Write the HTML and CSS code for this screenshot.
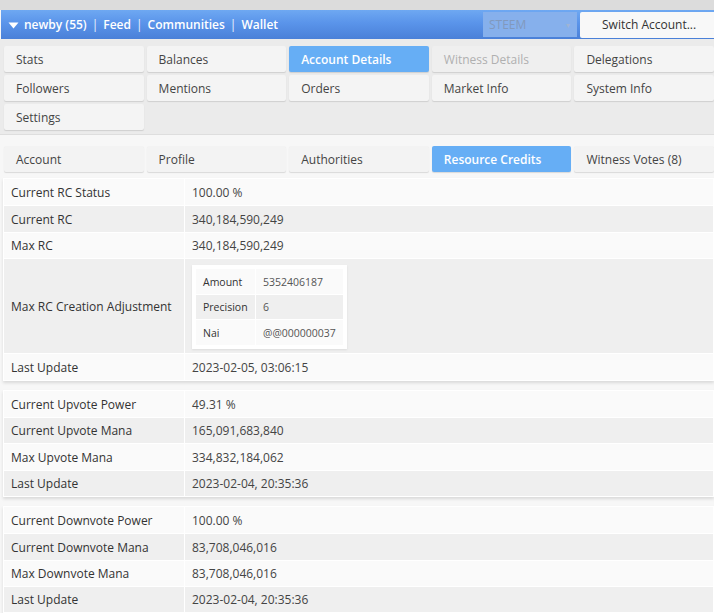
FILE: index.html
```html
<!DOCTYPE html>
<html>
<head>
<meta charset="utf-8">
<link rel="stylesheet" href="styles.css">
</head>
<body>
<div class="topstrip"></div>
<div class="navbar">
  <div class="nav-left">
    <svg class="caret" width="11" height="7" viewBox="0 0 11 7"><path d="M0.5 0.5 L10.5 0.5 L5.5 6.5 Z" fill="#ffffff"/></svg>
    <span>newby (55)</span><span class="sep">|</span><span>Feed</span><span class="sep">|</span><span>Communities</span><span class="sep">|</span><span>Wallet</span>
  </div>
  <div class="nav-right">
    <div class="select"><span>STEEM</span><span class="sel-arrow">▾</span></div>
    <div class="switch">Switch Account...</div>
  </div>
</div>
<div class="panel">
  <div class="tabgrid">
    <div class="tab">Stats</div>
    <div class="tab">Balances</div>
    <div class="tab active">Account Details</div>
    <div class="tab disabled">Witness Details</div>
    <div class="tab">Delegations</div>
    <div class="tab">Followers</div>
    <div class="tab">Mentions</div>
    <div class="tab">Orders</div>
    <div class="tab">Market Info</div>
    <div class="tab">System Info</div>
    <div class="tab">Settings</div>
  </div>
</div>
<div class="subtabs">
  <div class="tabgrid">
    <div class="tab">Account</div>
    <div class="tab">Profile</div>
    <div class="tab">Authorities</div>
    <div class="tab active">Resource Credits</div>
    <div class="tab">Witness Votes (8)</div>
  </div>
</div>
<div class="content">
  <table class="info">
    <tr class="r26"><td class="k">Current RC Status</td><td>100.00 %</td></tr>
    <tr class="r26"><td class="k">Current RC</td><td>340,184,590,249</td></tr>
    <tr><td class="k">Max RC</td><td>340,184,590,249</td></tr>
    <tr class="tall"><td class="k">Max RC Creation Adjustment</td><td class="nestcell">
      <table class="nested">
        <tr><td class="nk">Amount</td><td>5352406187</td></tr>
        <tr class="n24"><td class="nk">Precision</td><td>6</td></tr>
        <tr><td class="nk">Nai</td><td>@@000000037</td></tr>
      </table>
    </td></tr>
    <tr class="r26"><td class="k">Last Update</td><td>2023-02-05, 03:06:15</td></tr>
  </table>
  <table class="info">
    <tr class="r26"><td class="k">Current Upvote Power</td><td>49.31 %</td></tr>
    <tr><td class="k">Current Upvote Mana</td><td>165,091,683,840</td></tr>
    <tr class="r26"><td class="k">Max Upvote Mana</td><td>334,832,184,062</td></tr>
    <tr><td class="k">Last Update</td><td>2023-02-04, 20:35:36</td></tr>
  </table>
  <table class="info">
    <tr class="r26"><td class="k">Current Downvote Power</td><td>100.00 %</td></tr>
    <tr class="r26"><td class="k">Current Downvote Mana</td><td>83,708,046,016</td></tr>
    <tr><td class="k">Max Downvote Mana</td><td>83,708,046,016</td></tr>
    <tr><td class="k">Last Update</td><td>2023-02-04, 20:35:36</td></tr>
  </table>
</div>
</body>
</html>
```
FILE: styles.css
```css
html, body {
  margin: 0;
  padding: 0;
}
body {
  font-family: "Open Sans", "Noto Sans", sans-serif;
  font-size: 12px;
  color: #333;
  background: #f7f7f7;
  width: 714px;
  overflow: hidden;
}
.topstrip {
  height: 10px;
  background: #dcdcdc;
}
.navbar {
  height: 29px;
  margin-left: 1px;
  background: linear-gradient(to bottom, #6ea8f2 0%, #5a94ea 45%, #4a80d8 100%);
  display: flex;
  align-items: center;
  justify-content: space-between;
  color: #fff;
  font-weight: 600;
}
.nav-left {
  display: flex;
  align-items: center;
  padding-left: 7px;
  margin-top: -1px;
}
.caret {
  margin-right: 5px;
  margin-top: 2px;
}
.sep {
  margin: 0 5px;
  font-weight: 400;
  opacity: 0.9;
}
.nav-right {
  display: flex;
  align-items: center;
  height: 100%;
  gap: 3px;
}
.select {
  width: 94px;
  height: 25px;
  box-sizing: border-box;
  background: #86b0ec;
  color: #8199bd;
  font-weight: 400;
  display: flex;
  align-items: center;
  justify-content: space-between;
  padding: 0 7px 0 6px;
}
.sel-arrow {
  font-size: 8px;
  color: #9fb4d4;
}
.switch {
  width: 134px;
  height: 26px;
  box-sizing: border-box;
  background: #f8f8f8;
  color: #333;
  font-weight: 400;
  display: flex;
  align-items: center;
  padding-left: 22px;
  border-radius: 2px 0 0 2px;
}
.panel {
  background: #ebebeb;
  padding: 7px 0 4px 4px;
  border-bottom: 1px solid #dedede;
  box-shadow: 0 1px 1px rgba(0,0,0,0.05);
}
.tabgrid {
  display: grid;
  grid-template-columns: repeat(5, 1fr);
  gap: 3px;
}
.tab {
  height: 26px;
  box-sizing: border-box;
  background: #f4f4f4;
  border-radius: 2px;
  box-shadow: 0 1px 1px rgba(0,0,0,0.12);
  color: #444;
  display: flex;
  align-items: center;
  padding-left: 12px;
}
.tab.active {
  background: #66aef5;
  color: #fff;
  font-weight: 600;
}
.tab.disabled {
  color: #b0b0b0;
  background: #efefef;
}
.subtabs {
  padding: 11px 0 0 4px;
  background: #f7f7f7;
}
.subtabs .tab {
  background: #f3f3f3;
}
.subtabs .tab.active {
  background: #66aef5;
}
.content {
  padding: 6px 0 0 3px;
}
.info {
  width: 711px;
  border-collapse: separate;
  border-spacing: 1px;
  background: #fff;
  margin-bottom: 9px;
  box-shadow: 0 2px 3px rgba(0,0,0,0.12);
}
.info td {
  height: 25px;
  padding: 0 7px;
  box-sizing: border-box;
  color: #444;
  background: #fafafa;
  vertical-align: middle;
}
.info tr.r26 td {
  height: 26px;
}
.info tr:nth-child(even) td {
  background: #efefef;
}
.info td.k {
  width: 180px;
  color: #333;
}
.info tr.tall td {
  height: 94px;
  background: #efefef;
}
.info td.nestcell {
  padding: 6px 7px 4px 7px;
}
.nested {
  border-collapse: separate;
  border-spacing: 1px;
  background: #fff;
  padding: 3px;
  box-shadow: 0 1px 2px rgba(0,0,0,0.08);
  font-size: 10.5px;
}
.info tr.tall .nested td {
  height: 25px;
  padding: 0 7px;
  background: #fafafa;
  color: #555;
}
.info tr.tall .nested tr.n24 td {
  height: 24px;
}
.info tr.tall .nested tr:nth-child(even) td {
  background: #efefef;
}
.info tr.tall .nested td.nk {
  width: 59px;
  color: #333;
}
```
